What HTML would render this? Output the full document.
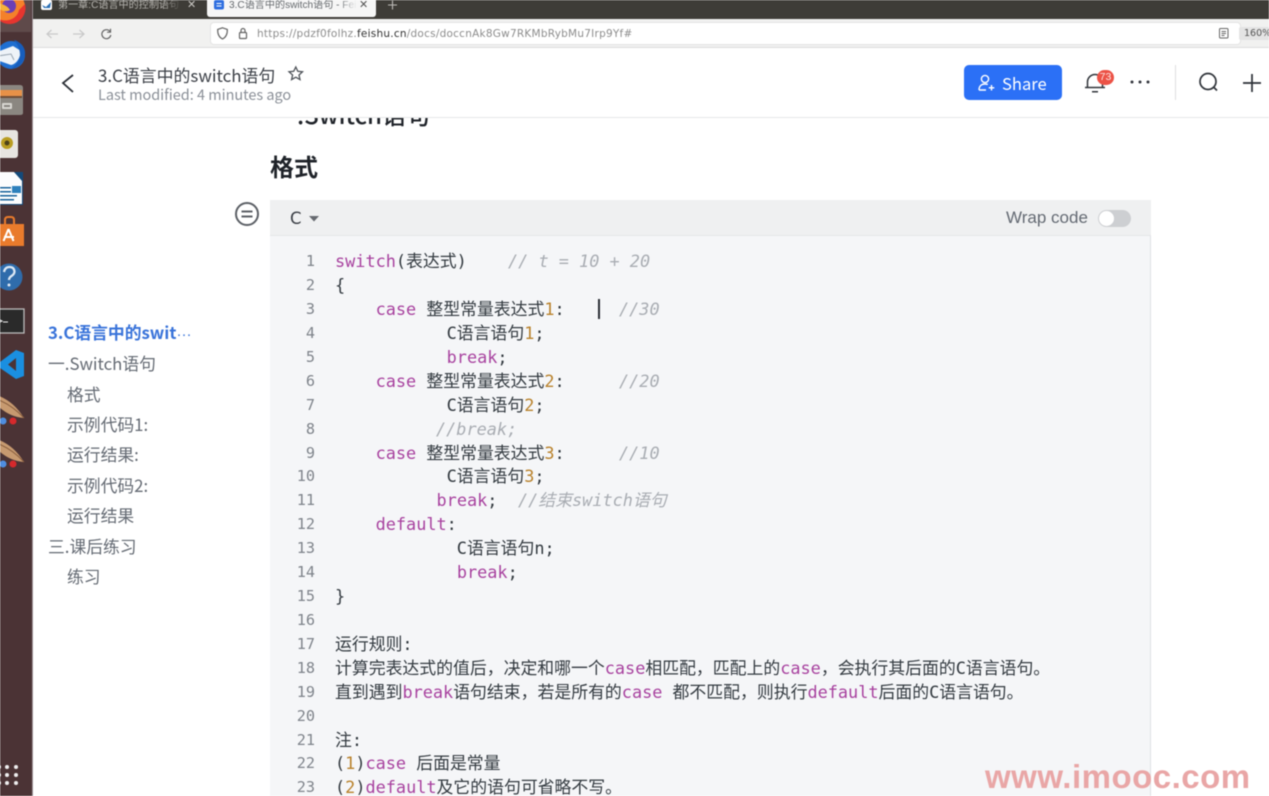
<!DOCTYPE html>
<html lang="zh"><head><meta charset="utf-8"><title>3.C语言中的switch语句</title>
<style>
html,body{margin:0;padding:0;width:1269px;height:796px;overflow:hidden;background:#fff}
body{font-family:"Liberation Sans","Noto Sans CJK SC",sans-serif}
#w{position:absolute;left:0;top:0;width:1269px;height:796px;overflow:hidden;background:#fff;filter:blur(.45px)}
.a{position:absolute;white-space:pre}
.ui{font-family:"Noto Sans CJK SC","Liberation Sans",sans-serif}
svg{position:absolute;overflow:visible}
.toc{position:absolute;font-family:"Noto Sans CJK SC",sans-serif;font-size:16.8px;line-height:20px;color:#646a73;white-space:pre}
.ln{position:absolute;width:40px;left:275px;text-align:right;font:15.2px/24px "DejaVu Sans Mono",monospace;color:#7f848b}
.c{position:absolute;left:335px;font:16.88px/24px "DejaVu Sans Mono","Noto Sans CJK SC",monospace;color:#333a40;white-space:pre}
.k{color:#a8429f}.n{color:#b9822c}.g{color:#a9adb3;font-style:italic}
</style></head><body><div id="w">
<!-- browser chrome -->
<div class="a" style="left:33px;top:0;width:1236px;height:19px;background:#3e3c37"></div>
<div class="a" style="left:33px;top:19px;width:1236px;height:29px;background:#f1f1f0;border-bottom:1px solid #dcdcdc;box-sizing:border-box"></div>
<div class="a" style="left:207px;top:0;width:169px;height:17px;background:#f6f6f6;border-radius:0 0 3px 3px"></div>
<svg style="left:41px;top:0" width="12" height="11"><rect width="11" height="10" rx="2" fill="#fff"/><path d="M1 5l4 2 5-5-1 6H3z" fill="#2a6fb5"/></svg>
<div class="a" style="left:58px;top:-1px;width:124px;overflow:hidden;font-size:10.1px;line-height:14px;color:#b5b3ae;-webkit-mask-image:linear-gradient(90deg,#000 85%,transparent)">第一章:C语言中的控制语句</div>
<div class="a" style="left:187px;top:-1px;font-size:11px;line-height:12px;color:#c8c6c2">✕</div>
<svg style="left:214px;top:0" width="10" height="10"><rect width="10" height="9.5" rx="2" fill="#2f6fe0"/><rect x="2.5" y="3" width="5" height="1" fill="#fff"/><rect x="2.5" y="5.5" width="5" height="1" fill="#fff"/></svg>
<div class="a" style="left:229px;top:-1px;width:128px;overflow:hidden;font-size:10.1px;line-height:14px;color:#666a6e;-webkit-mask-image:linear-gradient(90deg,#000 85%,transparent)">3.C语言中的switch语句 - Feishu</div>
<div class="a" style="left:359px;top:-1px;font-size:11px;line-height:12px;color:#555">✕</div>
<svg style="left:387px;top:0" width="11" height="11"><path d="M5.500 .5v9M1 5h9" stroke="#bdbbb7" stroke-width="1.100" fill="none"/></svg>
<div class="a" style="left:211px;top:23px;width:1029px;height:21px;background:#fff;border-radius:3px;box-shadow:0 0 0 1px #e4e4e4"></div>
<svg style="left:45px;top:27px" width="70" height="14" fill="none"><path d="M13 7H2M6.500 3L2 7l4.500 4" stroke="#c9c9c9" stroke-width="1.200"/><path d="M28 7h11M34.500 3L39 7l-4.500 4" stroke="#c9c9c9" stroke-width="1.200"/><path d="M65 4.500a4.500 4.500 0 1 0 .8 3.500M65.500 1.800v3.400h-3.400" stroke="#666" stroke-width="1.200"/></svg>
<svg style="left:216px;top:27px" width="30" height="13" fill="none" stroke="#666" stroke-width="1.200"><path d="M6.500 .8l4.800 1.600c.2 4.700-1.300 7.900-4.800 9.600C3 10.300 1.500 7.100 1.700 2.400z"/><rect x="23.500" y="5.500" width="7" height="6" rx="1"/><path d="M25 5.500V3.500a2 2 0 0 1 4 0v2"/></svg>
<div class="a" style="left:257px;top:27px;font:10.5px/15px 'DejaVu Sans',sans-serif;color:#8d8d8d;letter-spacing:.24px">https://pdzf0folhz.<span style="color:#333">feishu.cn</span>/docs/doccnAk8Gw7RKMbRybMu7Irp9Yf#</div>
<svg style="left:1219px;top:28px" width="10" height="11" fill="none" stroke="#666"><rect x=".5" y=".5" width="8.500" height="9.500" rx="1"/><path d="M2.500 3.500h4.500M2.500 5.500h4.500M2.500 7.500h3"/></svg>
<div class="a" style="left:1239px;top:27px;width:30px;height:13px;background:#e4e4e4;border-radius:2px 0 0 2px"></div>
<div class="a" style="left:1244px;top:27px;font:9.5px/13px 'DejaVu Sans',sans-serif;color:#555">160%</div>

<!-- dock -->
<div class="a" style="left:0;top:0;width:33px;height:796px;background:#4b3335;border-right:1px solid #9c9295;box-sizing:border-box"></div>
<div class="a" style="left:0;top:0;width:31px;height:32px;background:#5f4a4a"></div>
<svg style="left:0;top:0" width="33" height="500">
<circle cx="9" cy="7" r="16" fill="#f4812a"/><path d="M25 4a16 16 0 0 1-28 14c8 5 20 2 22-8z" fill="#e6352f"/><circle cx="9" cy="6" r="7" fill="#6b3fb5"/><path d="M-2 2c5 3 9 3 12 8-5 3-9 0-12-2z" fill="#f6b23a"/>
<circle cx="11" cy="55" r="14" fill="#1f6fd1"/><path d="M-3 52l16-6 8 5c-1 8-5 13-10 14l-14-5z" fill="#eef3f8"/><path d="M14 40c7 2 12 8 11 15-1 8-7 13-14 14 5-4 9-8 9-14 0-7-3-11-6-15z" fill="#175dbb"/><path d="M-2 56l13-2 3 6" stroke="#9aa6b2" fill="none"/>
<path d="M0 85h20q3 0 3 3v25q0 2-3 2H0z" fill="#8b8781"/><rect x="0" y="90" width="22" height="6" fill="#e79148"/><rect x="0" y="96" width="22" height="2" fill="#6f4d38"/><rect x="2" y="103" width="10" height="6" rx="1" fill="#d8d6d1"/><rect x="4" y="105" width="6" height="2" fill="#87847f"/>
<rect x="-3" y="130" width="21" height="28" rx="3" fill="#e7e5e1"/><circle cx="7" cy="143" r="6" fill="#b99d22"/><circle cx="7" cy="143" r="2.500" fill="#4d421a"/>
<path d="M0 172h14l8 7v25H0z" fill="#fbfcfd"/><path d="M14 172h9v9h-1z" fill="#134a7a"/><path d="M22 181v23H0v1h23v-24z" fill="#134a7a"/><rect x="0" y="187" width="11" height="1.500" fill="#19639c"/><rect x="0" y="191" width="11" height="1.500" fill="#19639c"/><rect x="0" y="195" width="17" height="1.500" fill="#19639c"/><rect x="0" y="199" width="14" height="1.500" fill="#19639c"/><rect x="12" y="186" width="9" height="7" fill="#2d80bc"/>
<rect x="0" y="224" width="24" height="22" fill="#e97b2c"/><path d="M5 224v-4q0-3 3-3h3q3 0 3 3v4" stroke="#e97b2c" stroke-width="2" fill="none"/><path d="M8.500 229l-5 12M8.500 229l5 12M4 237h10" stroke="#fff" stroke-width="2" fill="none"/>
<circle cx="9" cy="277" r="13.500" fill="#2f6cab"/><path d="M4 272q1-5 5.500-5t5 4.500q0 2.500-3 4.500-2.500 1.500-2.500 4" stroke="#dce8f4" stroke-width="2.300" fill="none"/><circle cx="9" cy="285" r="1.500" fill="#dce8f4"/>
<rect x="-3" y="309" width="27" height="24" fill="#2a2a2a" stroke="#bcbcbc" stroke-width="1.300"/><path d="M0 320l2 1-2 1M3 322h5" stroke="#eee" fill="none"/>
<path fill-rule="evenodd" d="M24 353L16 350 0 362v6l16 11 8-3zM16 358l-8 6.500 8 6.500z" fill="#1a8fe0"/>
<path d="M-1 396Q14 402 24 418 10 417-1 407z" fill="#c79a70"/><path d="M-1 400q14 6 25 18" stroke="#8a5f3f" fill="none"/><circle cx="3" cy="421" r="3.500" fill="#4f8ee0"/><circle cx="13" cy="421" r="3.500" fill="#d5292c"/>
<path d="M-1 440Q14 446 24 462 10 461-1 451z" fill="#c79a70"/><path d="M-1 444q14 6 25 18" stroke="#8a5f3f" fill="none"/><circle cx="3" cy="464" r="3.500" fill="#4f8ee0"/><circle cx="13" cy="464" r="3.500" fill="#d5292c"/>
</svg>
<svg style="left:0;top:760px" width="33" height="30" fill="#eee">
<circle cx="-1" cy="7" r="2"/><circle cx="7" cy="7" r="2"/><circle cx="16" cy="7" r="2"/><circle cx="-1" cy="15" r="2"/><circle cx="7" cy="15" r="2"/><circle cx="16" cy="15" r="2"/><circle cx="-1" cy="23" r="2"/><circle cx="7" cy="23" r="2"/><circle cx="16" cy="23" r="2"/>
</svg>

<!-- clipped heading -->
<div class="a ui" style="left:297px;top:97px;font-size:24px;line-height:34px;color:#1f2329;font-weight:500">.Switch语句</div>
<!-- doc header -->
<div class="a" style="left:33px;top:48px;width:1236px;height:70px;background:#fff;border-bottom:1px solid #e6e7e8;box-sizing:border-box"></div>
<svg style="left:62px;top:73px" width="16" height="20" fill="none"><path d="M11 2L1 10l10 9" stroke="#2b2f36" stroke-width="1.800"/></svg>
<div class="a ui" style="left:98px;top:63px;font-size:16.9px;line-height:24px;color:#3b3f46">3.C语言中的switch语句</div>
<svg style="left:288px;top:66px" width="16" height="15" fill="none"><path d="M7.800 1l2 4.300 4.700.5-3.500 3.200 1 4.600-4.200-2.400-4.200 2.400 1-4.600L1 5.800l4.700-.5z" stroke="#4e5359" stroke-width="1.300"/></svg>
<div class="a ui" style="left:98px;top:85px;font-size:14.45px;line-height:20px;color:#8a8f97">Last modified: 4 minutes ago</div>
<div class="a" style="left:964px;top:65px;width:98px;height:35px;background:#2b70f6;border-radius:5px"></div>
<svg style="left:978px;top:74px" width="18" height="18" fill="none" stroke="#fff" stroke-width="1.400"><circle cx="7" cy="5" r="3.600"/><path d="M1 16c0-4 2.600-6 6-6 1 0 2 .2 2.800.5M1 16h7M13.500 11v5.500M10.800 13.800h5.500"/></svg>
<div class="a ui" style="left:1002px;top:71px;font-size:16.6px;line-height:24px;color:#fff">Share</div>
<svg style="left:1084px;top:73px" width="22" height="20" fill="none" stroke="#30343a" stroke-width="1.500"><path d="M1 14.500h20M3.500 14.500V9a7.500 7.500 0 0 1 15 0v5.500M8 18.800h6"/></svg>
<div class="a" style="left:1097px;top:70px;width:17px;height:15px;background:#ec5246;border-radius:8px;text-align:center;font:10.5px/15px 'Liberation Sans',sans-serif;color:#fde5e2">73</div>
<svg style="left:1130px;top:80px" width="20" height="5" fill="#33373d"><circle cx="2" cy="2" r="1.500"/><circle cx="10" cy="2" r="1.500"/><circle cx="18" cy="2" r="1.500"/></svg>
<div class="a" style="left:1175px;top:65px;width:1px;height:35px;background:#dedfe0"></div>
<svg style="left:1198px;top:72px" width="22" height="20" fill="none" stroke="#30343a" stroke-width="1.700"><circle cx="10" cy="9.500" r="8"/><path d="M16 15.500l3 3"/></svg>
<svg style="left:1243px;top:74px" width="18" height="18" fill="none" stroke="#2b2f36" stroke-width="1.700"><path d="M9 0v18M0 9h18"/></svg>

<!-- TOC -->
<div class="toc" style="left:48px;top:322px;color:#3a74da;font-weight:700">3.C语言中的swit<span style="font-family:'Liberation Sans',sans-serif;font-weight:400;font-size:15px">···</span></div>
<div class="toc" style="left:48px;top:353px">一.Switch语句</div>
<div class="toc" style="left:67px;top:384px">格式</div>
<div class="toc" style="left:67px;top:414px">示例代码1:</div>
<div class="toc" style="left:67px;top:444px">运行结果:</div>
<div class="toc" style="left:67px;top:475px">示例代码2:</div>
<div class="toc" style="left:67px;top:505px">运行结果</div>
<div class="toc" style="left:48px;top:536px">三.课后练习</div>
<div class="toc" style="left:67px;top:566px">练习</div>

<!-- heading -->
<div class="a ui" style="left:270px;top:148px;font-size:24px;line-height:35px;font-weight:700;color:#1f2329">格式</div>
<svg style="left:235px;top:202px" width="25" height="25" fill="none" stroke="#5c6066" stroke-width="2"><circle cx="12" cy="12" r="11"/><path d="M6.500 9.500h11M6.500 14.500h11"/></svg>

<!-- code block -->
<div class="a" style="left:270px;top:200px;width:881px;height:596px;background:#f5f6f8;border-right:1px solid #dfe1e4;box-sizing:border-box"></div>
<div class="a" style="left:270px;top:200px;width:881px;height:36px;background:#eff0f1;border-bottom:1px solid #e5e6e8;box-sizing:border-box"></div>
<div class="a" style="left:290px;top:208px;font:16.5px/22px 'DejaVu Sans',sans-serif;color:#3b3f46">C</div>
<svg style="left:309px;top:216px" width="11" height="7"><path d="M0 0h10L5 5.500z" fill="#666a70"/></svg>
<div class="a" style="left:1006px;top:208px;font-size:17px;line-height:20px;color:#646a73">Wrap code</div>
<div class="a" style="left:1098px;top:210px;width:33px;height:17px;background:#cdcfd2;border-radius:9px"></div>
<div class="a" style="left:1099px;top:211px;width:15px;height:15px;background:#fff;border-radius:50%"></div>

<div class="ln" style="top:249px">1</div><div class="ln" style="top:273px">2</div><div class="ln" style="top:297px">3</div><div class="ln" style="top:321px">4</div><div class="ln" style="top:345px">5</div><div class="ln" style="top:369px">6</div><div class="ln" style="top:393px">7</div><div class="ln" style="top:417px">8</div><div class="ln" style="top:441px">9</div><div class="ln" style="top:464px">10</div><div class="ln" style="top:488px">11</div><div class="ln" style="top:512px">12</div><div class="ln" style="top:536px">13</div><div class="ln" style="top:560px">14</div><div class="ln" style="top:584px">15</div><div class="ln" style="top:608px">16</div><div class="ln" style="top:632px">17</div><div class="ln" style="top:656px">18</div><div class="ln" style="top:680px">19</div><div class="ln" style="top:704px">20</div><div class="ln" style="top:728px">21</div><div class="ln" style="top:751px">22</div><div class="ln" style="top:775px">23</div>

<div class="c" style="top:249px"><span class="k">switch</span>(表达式)</div><div class="c g" style="left:508px;top:249px">// t = 10 + 20</div>
<div class="c" style="top:273px">{</div>
<div class="c" style="top:297px">    <span class="k">case</span> 整型常量表达式<span class="n">1</span>:</div><div class="a" style="left:598px;top:299px;width:2px;height:20px;background:#2b2f36"></div><div class="c g" style="left:619px;top:297px">//30</div>
<div class="c" style="top:321px">           C语言语句<span class="n">1</span>;</div>
<div class="c" style="top:345px">           <span class="k">break</span>;</div>
<div class="c" style="top:369px">    <span class="k">case</span> 整型常量表达式<span class="n">2</span>:</div><div class="c g" style="left:619px;top:369px">//20</div>
<div class="c" style="top:393px">           C语言语句<span class="n">2</span>;</div>
<div class="c g" style="left:436px;top:417px">//break;</div>
<div class="c" style="top:441px">    <span class="k">case</span> 整型常量表达式<span class="n">3</span>:</div><div class="c g" style="left:619px;top:441px">//10</div>
<div class="c" style="top:464px">           C语言语句<span class="n">3</span>;</div>
<div class="c" style="top:488px">          <span class="k">break</span>;</div><div class="c g" style="left:518px;top:488px">//结束switch语句</div>
<div class="c" style="top:512px">    <span class="k">default</span>:</div>
<div class="c" style="top:536px">            C语言语句n;</div>
<div class="c" style="top:560px">            <span class="k">break</span>;</div>
<div class="c" style="top:584px">}</div>
<div class="c" style="top:632px">运行规则:</div>
<div class="c" style="top:656px">计算完表达式的值后，决定和哪一个<span class="k">case</span>相匹配，匹配上的<span class="k">case</span>，会执行其后面的C语言语句。</div>
<div class="c" style="top:680px">直到遇到<span class="k">break</span>语句结束，若是所有的<span class="k">case</span> 都不匹配，则执行<span class="k">default</span>后面的C语言语句。</div>
<div class="c" style="top:728px">注:</div>
<div class="c" style="top:751px">(<span class="n">1</span>)<span class="k">case</span> 后面是常量</div>
<div class="c" style="top:775px">(<span class="n">2</span>)<span class="k">default</span>及它的语句可省略不写。</div>

<!-- watermark -->
<div class="a" style="left:985px;top:758px;font-size:33px;line-height:38px;font-weight:700;color:#e9a6a6;letter-spacing:.5px">www.imooc.com</div>
</div></body></html>
